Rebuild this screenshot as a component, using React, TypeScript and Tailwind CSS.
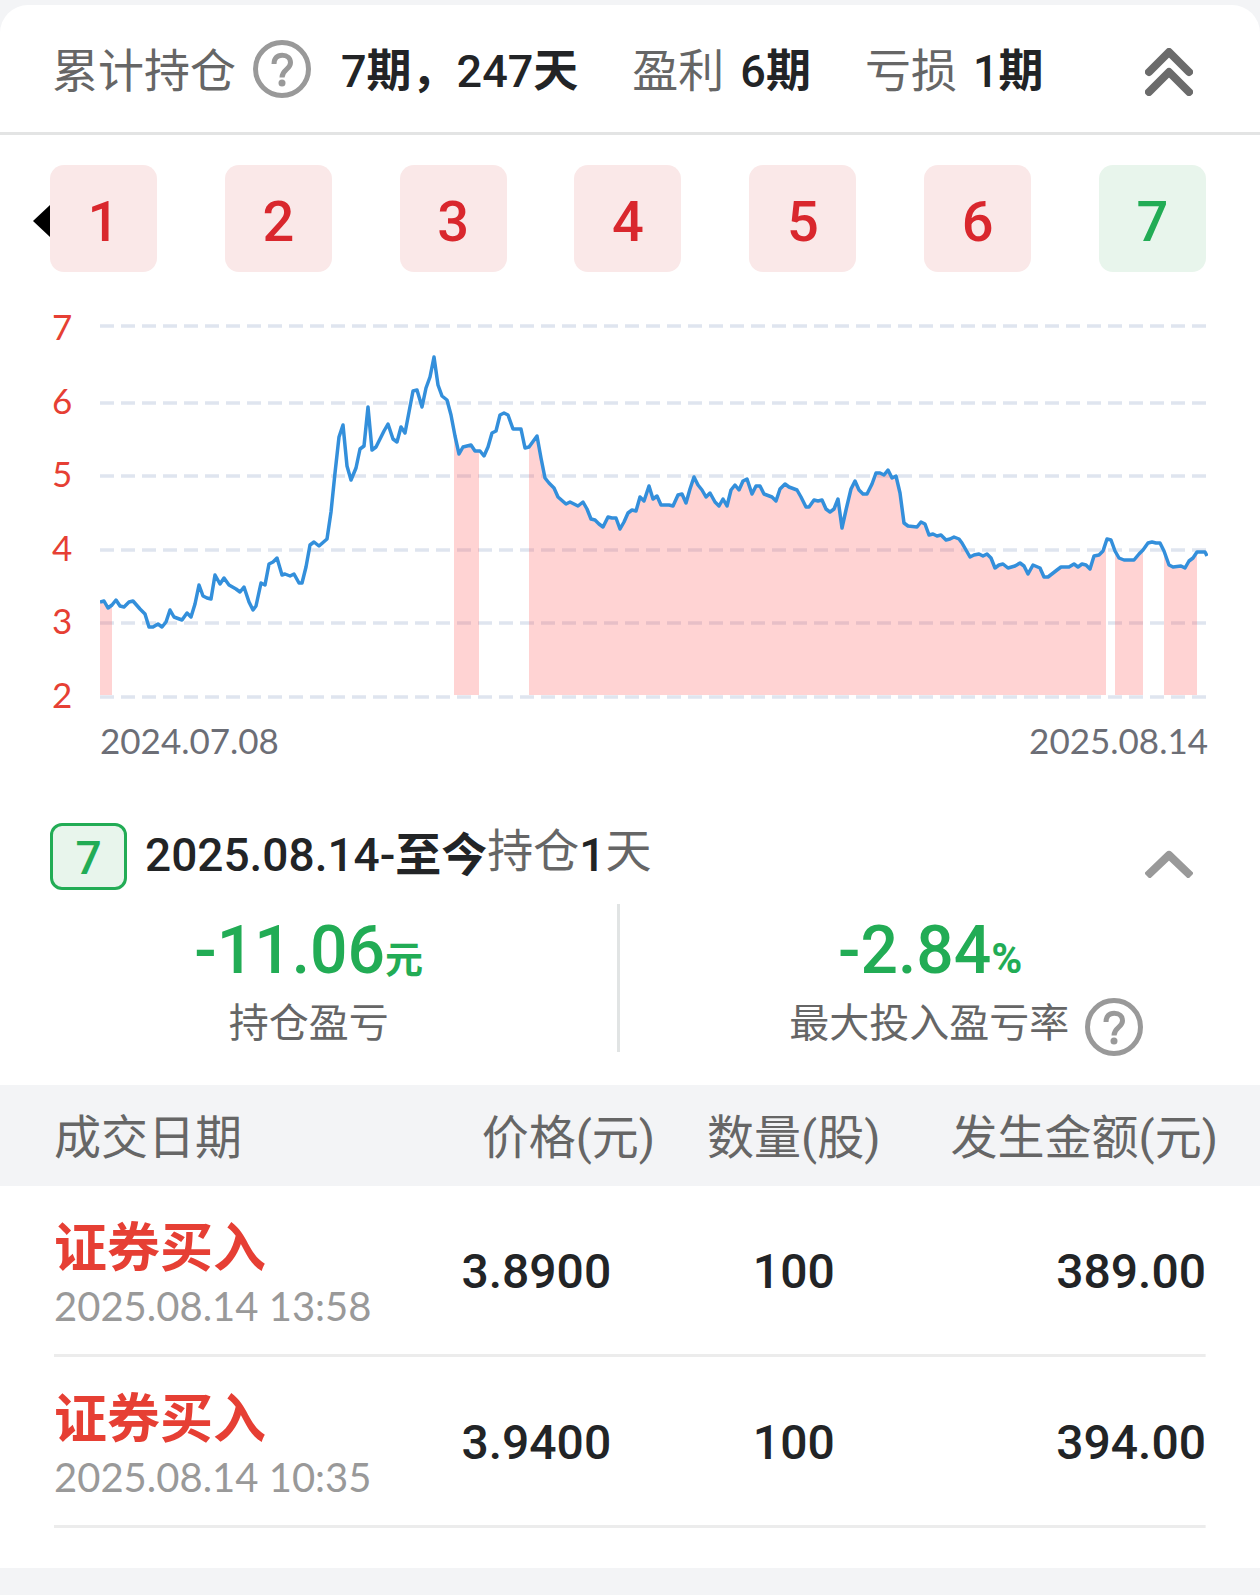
type IconProps = { className?: string };

const periods = [
  { id: 1, profit: true },
  { id: 2, profit: true },
  { id: 3, profit: true },
  { id: 4, profit: true },
  { id: 5, profit: true },
  { id: 6, profit: true },
  { id: 7, profit: false },
];

const trades = [
  { type: "证券买入", time: "2025.08.14 13:58", price: "3.8900", amount: "100", total: "389.00" },
  { type: "证券买入", time: "2025.08.14 10:35", price: "3.9400", amount: "100", total: "394.00" },
];

const axisLabels = [7, 6, 5, 4, 3, 2];
const gridLines = [6, 83, 156, 230, 303, 377];

// x start and width of each holding period
const holdings = [
  [0, 12],
  [354, 25],
  [429, 577],
  [1015, 28],
  [1064, 33],
];

const pricePoints =
  "0,282 4,281 8,288 12,285 16,280 20,286 24,287 29,282 33,281 40,289 45,294 49,307 53,307 58,304 62,307 66,302 70,290 74,297 82,300 87,293 91,297 95,284 99,265 103,276 107,278 111,279 115,255 120,264 124,258 129,265 136,269 140,272 144,267 149,282 153,290 156,286 161,263 165,265 169,244 173,242 177,238 182,255 185,254 190,256 194,254 199,263 202,263 206,247 210,225 214,222 219,226 227,219 " +
  "231,192 235,153 239,117 243,105 247,146 251,160 256,148 260,129 264,126 268,87 272,130 276,127 284,111 288,104 293,119 297,122 301,107 305,113 309,92 313,71 317,70 322,87 326,68 330,57 334,37 338,65 342,76 347,80 351,95 355,116 359,134 363,127 371,125 375,131 380,131 384,136 388,127 392,113 396,111 400,95 404,93 408,95 413,109 421,109 425,128 429,127 437,116 441,138 445,158 449,163 454,168 458,177 466,184 470,182 478,186 483,182 487,189 491,199 495,200 499,204 503,207 " +
  "508,197 512,198 516,198 520,209 524,202 528,193 532,190 536,191 540,177 544,181 549,166 553,179 557,176 561,185 569,185 573,186 578,175 582,174 586,183 590,169 594,157 598,165 602,170 606,177 610,173 615,182 619,186 623,179 627,186 631,170 635,165 639,170 643,161 647,159 652,174 656,166 660,166 664,174 672,177 676,181 680,169 685,164 689,167 697,170 701,177 706,187 709,187 714,180 718,181 722,180 726,189 730,192 734,189 738,179 742,208 746,190 751,169 755,161 759,170 763,174 767,174 772,164 776,153 780,153 784,155 788,150 792,158 796,156 800,173 804,203 808,206 " +
  "817,207 821,202 825,204 829,215 833,214 837,216 841,215 846,220 850,219 854,217 859,219 862,223 866,230 870,237 874,235 879,234 883,236 887,234 891,238 895,248 899,245 903,244 908,248 915,246 920,243 924,246 928,254 933,245 940,248 944,257 948,257 957,250 961,247 969,247 974,244 978,247 982,244 986,245 990,249 994,236 999,235 1003,231 1007,219 1011,220 1015,231 1019,238 1024,240 1034,240 1039,234 1043,230 1048,223 1052,222 1056,223 1060,223 1064,231 1069,245 1073,247 1081,246 1085,248 1089,241 1093,238 1097,232 1105,232 1107,236";

const HelpIcon = ({ className }: IconProps) => (
  <svg className={className} width="58" height="58" viewBox="0 0 58 58" fill="none" aria-hidden="true">
    <circle cx="29" cy="29" r="26.5" stroke="#999999" strokeWidth="5" />
    <path
      d="M21 24C21 18.5 24 15.2 29.2 15.2C34.3 15.2 37.5 18.5 37.5 22.8C37.5 29.5 29 29.5 29 37.5"
      stroke="#999999"
      strokeWidth="5"
    />
    <circle cx="29" cy="43" r="3.5" fill="#999999" />
  </svg>
);

const DoubleChevronUp = () => (
  <svg width="48" height="48" viewBox="0 0 48 48" fill="none" stroke="#6b6b6b" strokeWidth="8" strokeLinecap="round" strokeLinejoin="round" aria-hidden="true">
    <path d="M4 24L24 4L44 24" />
    <path d="M4 44L24 24L44 44" />
  </svg>
);

const ChevronUp = () => (
  <svg width="48" height="28" viewBox="0 0 48 28" fill="none" stroke="#999999" strokeWidth="8" aria-hidden="true">
    <path d="M2 26L24 5L46 26" strokeLinejoin="round" />
  </svg>
);

const Summary = () => (
  <header className="flex items-center border-b-3 border-[#e3e4e4] h-[130px] pl-[52px] pr-[67px] text-[46px] leading-none text-[#666666] whitespace-nowrap">
    <span className="pt-1">累计持仓</span>
    <button type="button" aria-label="累计持仓说明" className="ml-[17px] mr-[30px]">
      <HelpIcon />
    </button>
    <div className="flex items-baseline gap-[54px] pt-1">
      <span className="text-[45px] font-medium text-[#222426]">
        7<b>期，</b>247<b>天</b>
      </span>
      <span className="flex items-baseline gap-4">
        盈利
        <span className="text-[45px] font-medium text-[#222426]">
          6<b>期</b>
        </span>
      </span>
      <span className="flex items-baseline gap-4">
        亏损
        <span className="text-[45px] font-medium text-[#222426]">
          1<b>期</b>
        </span>
      </span>
    </div>
    <button type="button" aria-label="收起" className="ml-auto pt-1.5">
      <DoubleChevronUp />
    </button>
  </header>
);

const PeriodTabs = () => (
  <nav className="flex items-center pt-[30px] pl-[33px] pr-[54px]">
    <svg className="mt-1" width="17" height="32" viewBox="0 0 17 32" aria-hidden="true">
      <path d="M17 0V32L0 16Z" fill="#000000" />
    </svg>
    <div className="flex flex-1 justify-between text-[56px] leading-none font-medium">
      {periods.map(({ id, profit }) => (
        <button
          key={id}
          type="button"
          className={`size-[107px] rounded-[14px] pt-1.5 ${
            profit ? "bg-[#fae8e8] text-[#d9272d]" : "bg-[#e8f5ec] text-[#22ac55]"
          }`}
        >
          {id}
        </button>
      ))}
    </div>
  </nav>
);

const PriceChart = () => (
  <section className="mt-[34px] pl-[52px] pr-[52px] font-['Lato','Noto_Sans_CJK_SC',sans-serif] text-[35px] leading-10">
    <div className="flex">
      <div className="flex h-[408px] w-12 shrink-0 flex-col justify-between text-[#e63f34]">
        {axisLabels.map((label) => (
          <span key={label}>{label}</span>
        ))}
      </div>
      <svg className="mt-3.5 h-auto min-w-0 flex-1 self-start" viewBox="0 0 1108 382" fill="none" role="img" aria-label="价格走势">
        <clipPath id="holdings">
          {holdings.map(([x, width]) => (
            <rect key={x} x={x} y="0" width={width} height="375" />
          ))}
        </clipPath>
        {gridLines.map((y) => (
          <path key={y} d={`M0 ${y}H1106`} stroke="#dfe5ef" strokeWidth="3.5" strokeDasharray="14 7" />
        ))}
        <polygon points={`0,375 ${pricePoints} 1107,375`} fill="#ff5050" fillOpacity="0.25" clipPath="url(#holdings)" />
        <polyline points={pricePoints} stroke="#338fdb" strokeWidth="3.5" strokeLinejoin="round" />
      </svg>
    </div>
    <div className="mt-1.5 ml-12 flex justify-between text-[#6c6e76]">
      <span>2024.07.08</span>
      <span>2025.08.14</span>
    </div>
  </section>
);

const PeriodDetail = () => (
  <section>
    <div className="mt-[63px] flex items-center pl-[50px] pr-[67px] text-[46px] leading-none whitespace-nowrap">
      <span className="flex h-[67px] w-[77px] items-center justify-center rounded-xl border-3 border-[#22ac55] bg-[#e8f5ec] pt-0.5 font-medium text-[#22ac55]">
        7
      </span>
      <p className="ml-[18px] flex pb-1 text-[#666666]">
        <span className="font-medium text-[#222426]">
          2025.08.14-<b>至今</b>
        </span>
        <span className="-mt-1">持仓</span>
        <span className="font-medium text-[#222426]">1</span>
        <span className="-mt-1">天</span>
      </p>
      <button type="button" aria-label="收起明细" className="mt-3.5 ml-auto">
        <ChevronUp />
      </button>
    </div>
    <div className="mt-3.5 flex h-[148px] text-[40px] leading-[52px] text-[#666666]">
      <div className="flex w-[49%] flex-col items-center">
        <p className="text-[66px] leading-[94px] font-medium text-[#22ac55]">
          -11.06<b className="text-[38px] leading-none">元</b>
        </p>
        <p>持仓盈亏</p>
      </div>
      <div className="w-[3px] bg-[#e1e4e4]" />
      <div className="flex flex-1 flex-col items-center pr-5">
        <p className="text-[66px] leading-[94px] font-medium text-[#22ac55]">
          -2.84<b className="text-[42px] leading-none">%</b>
        </p>
        <div className="flex gap-4 pl-[72px]">
          <p>最大投入盈亏率</p>
          <button type="button" aria-label="最大投入盈亏率说明">
            <HelpIcon />
          </button>
        </div>
      </div>
    </div>
  </section>
);

const TradeTable = () => (
  <table className="mt-[33px] mb-10 w-full table-fixed text-right whitespace-nowrap">
    <thead className="bg-[#f3f4f6] text-[47px] leading-none text-[#666666]">
      <tr className="h-[101px]">
        <th className="w-[33%] pt-1 pl-[54px] text-left font-normal">成交日期</th>
        <th className="w-[19%] pt-1 font-normal">价格(元)</th>
        <th className="w-[22%] pt-1 text-center font-normal">数量(股)</th>
        <th className="pt-1 pr-[42px] font-normal">发生金额(元)</th>
      </tr>
    </thead>
    <tbody className="text-[48px] font-medium text-[#222426]">
      {trades.map((trade) => (
        <tr
          key={trade.time}
          className="h-[171px] bg-[linear-gradient(#ececec,#ececec)] bg-[length:calc(100%-108px)_3px] bg-bottom bg-no-repeat"
        >
          <td className="pt-1.5 pl-[54px] text-left">
            <p className="text-[53px] leading-[62px] font-bold text-[#e63f34]">{trade.type}</p>
            <p className="font-['Lato',sans-serif] text-[40px] leading-[52px] font-normal text-[#999999]">{trade.time}</p>
          </td>
          <td className="pr-11">{trade.price}</td>
          <td className="text-center">{trade.amount}</td>
          <td className="pr-[54px]">{trade.total}</td>
        </tr>
      ))}
    </tbody>
  </table>
);

export default function App() {
  return (
    <main className="min-h-screen bg-[#f3f4f6] pt-[5px] pb-[27px] font-['Roboto','Noto_Sans_CJK_SC',sans-serif]">
      <div className="flow-root overflow-hidden rounded-t-[28px] bg-white">
        <Summary />
        <PeriodTabs />
        <PriceChart />
        <PeriodDetail />
        <TradeTable />
      </div>
    </main>
  );
}
